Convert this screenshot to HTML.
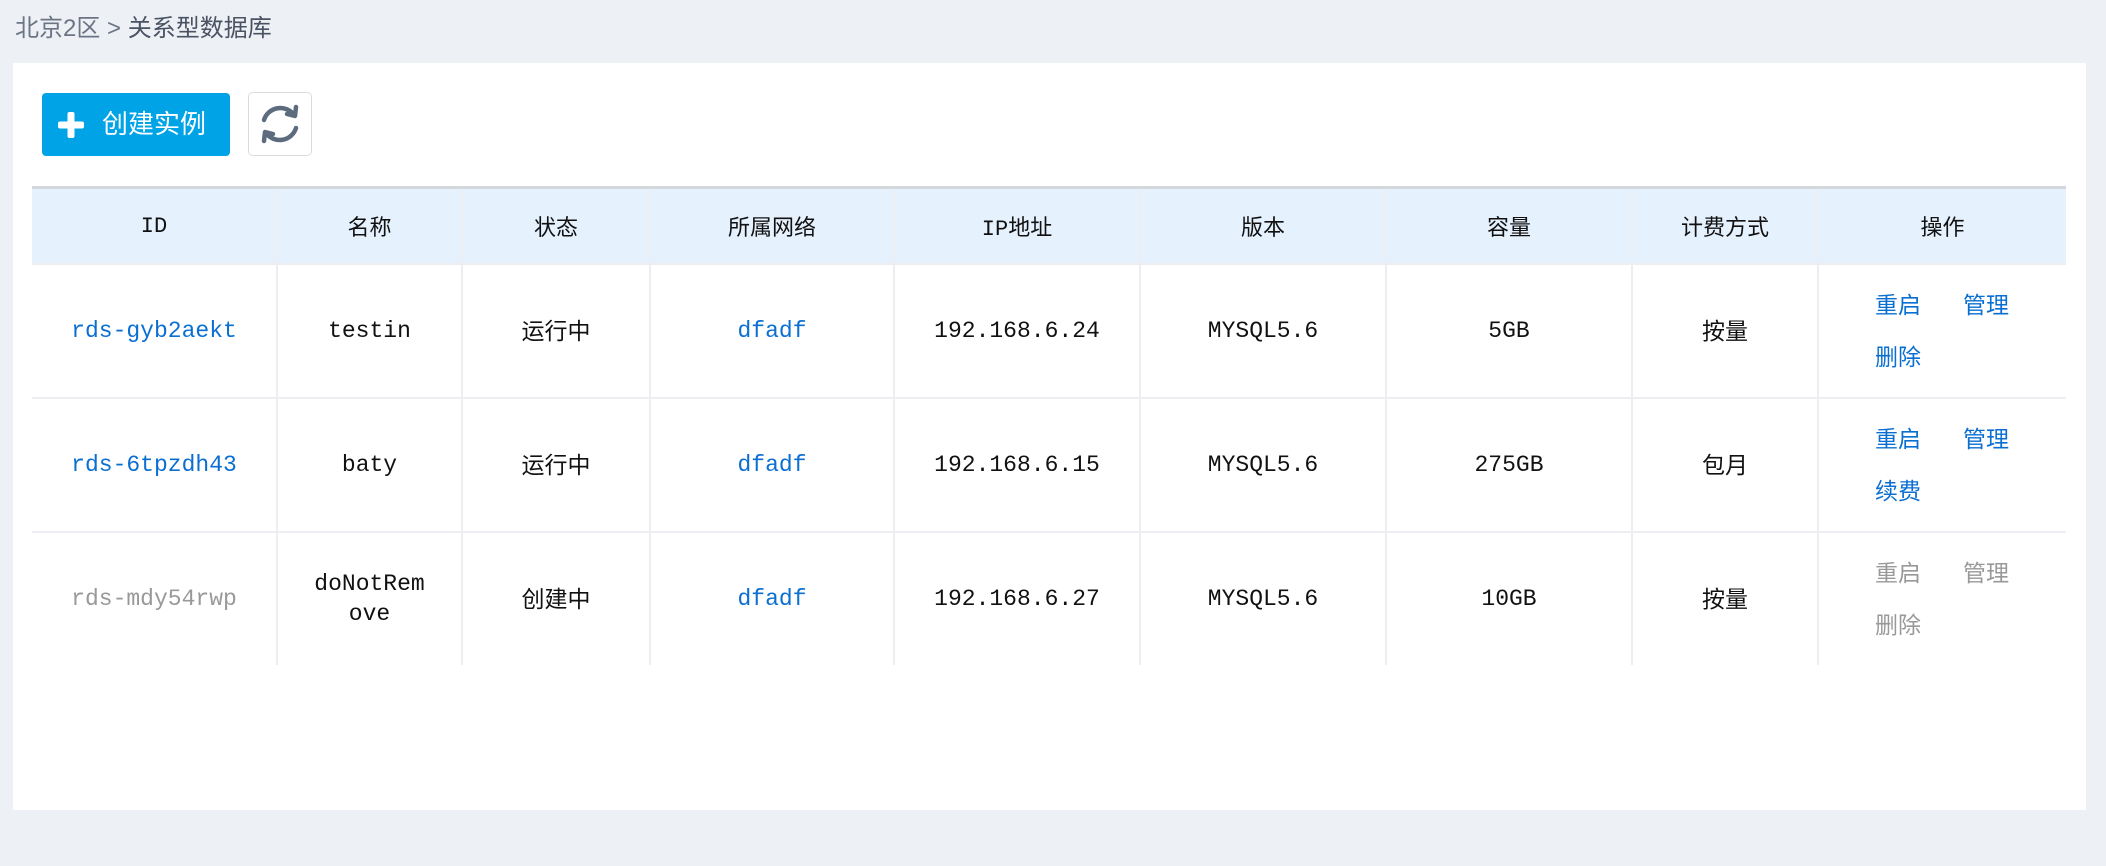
<!DOCTYPE html>
<html><head><meta charset="utf-8"><style>
html,body{margin:0;padding:0;}
body{width:2106px;height:866px;background:#edf0f5;position:relative;overflow:hidden;font-family:"Liberation Sans","Noto Sans CJK SC",sans-serif;}
.bc{position:absolute;left:15px;top:14px;font-size:24px;color:#6b7585;line-height:30px;}
.bc b{font-weight:normal;color:#4a5363;}
.panel{position:absolute;left:13px;top:63px;width:2073px;height:747px;background:#fff;}
.btn{position:absolute;left:42px;top:93px;width:188px;height:63px;background:#00a3e6;border-radius:4px;color:#fff;font-size:26px;line-height:63px;}
.btn .p{position:absolute;left:16px;top:19px;width:26px;height:26px;}
.btn span{position:absolute;left:60px;top:0;}
.rf{position:absolute;left:248px;top:92px;width:62px;height:62px;border:1px solid #d8dbe0;border-radius:5px;background:#fff;}
table{position:absolute;left:32px;top:186px;width:2034px;border-collapse:collapse;table-layout:fixed;border-top:3px solid #d4d7dc;}
th{background:#e5f1fd;height:72px;font-weight:normal;font-size:22px;color:#111;border-left:2px solid #eceef1;}
th.m{font-family:"Liberation Mono","Noto Sans CJK SC",monospace;}
td{height:132px;border-top:2px solid #eceef1;border-left:2px solid #eceef1;text-align:center;font-family:"Liberation Mono","Noto Sans CJK SC",monospace;font-size:23px;color:#111;line-height:30px;padding:0 10px;}
th:first-child,td:first-child{border-left:none;}
td.c{font-family:"Liberation Sans","Noto Sans CJK SC",sans-serif;font-size:23px;}
.bl{color:#0b6fd2;}
.gr{color:#999;}
td.op{text-align:left;padding-left:56px;font-family:"Liberation Sans","Noto Sans CJK SC",sans-serif;font-size:23px;line-height:52px;}
td.op i{font-style:normal;display:inline-block;width:88px;}
</style></head><body>
<div class="bc">北京2区 &gt; <b>关系型数据库</b></div>
<div class="panel"></div>
<div class="btn"><svg class="p" viewBox="0 0 26 26"><rect x="9.5" y="0" width="7" height="26" rx="2" fill="#fff"/><rect x="0" y="9.5" width="26" height="7" rx="2" fill="#fff"/></svg><span>创建实例</span></div>
<div class="rf"><svg width="62" height="62" viewBox="0 0 62 62" fill="none" stroke="#5d6b7e" stroke-width="4.5" stroke-linecap="round"><path d="M15 27 A17 17 0 0 1 45 22"/><path d="M47 35 A17 17 0 0 1 17 40"/><path d="M38 21 L46 23 L47 14" stroke-linejoin="round"/><path d="M24 41 L16 39 L15 48" stroke-linejoin="round"/></svg></div>
<table>
<colgroup><col style="width:245px"><col style="width:185px"><col style="width:188px"><col style="width:244px"><col style="width:246px"><col style="width:246px"><col style="width:246px"><col style="width:186px"><col style="width:248px"></colgroup>
<tr><th class="m">ID</th><th>名称</th><th>状态</th><th>所属网络</th><th class="m">IP地址</th><th>版本</th><th>容量</th><th>计费方式</th><th>操作</th></tr>
<tr><td class="bl">rds-gyb2aekt</td><td>testin</td><td class="c">运行中</td><td class="bl">dfadf</td><td>192.168.6.24</td><td>MYSQL5.6</td><td>5GB</td><td class="c">按量</td><td class="op bl"><i>重启</i>管理<br>删除</td></tr>
<tr><td class="bl">rds-6tpzdh43</td><td>baty</td><td class="c">运行中</td><td class="bl">dfadf</td><td>192.168.6.15</td><td>MYSQL5.6</td><td>275GB</td><td class="c">包月</td><td class="op bl"><i>重启</i>管理<br>续费</td></tr>
<tr><td class="gr">rds-mdy54rwp</td><td>doNotRem<br>ove</td><td class="c">创建中</td><td class="bl">dfadf</td><td>192.168.6.27</td><td>MYSQL5.6</td><td>10GB</td><td class="c">按量</td><td class="op gr"><i>重启</i>管理<br>删除</td></tr>
</table>
</body></html>
